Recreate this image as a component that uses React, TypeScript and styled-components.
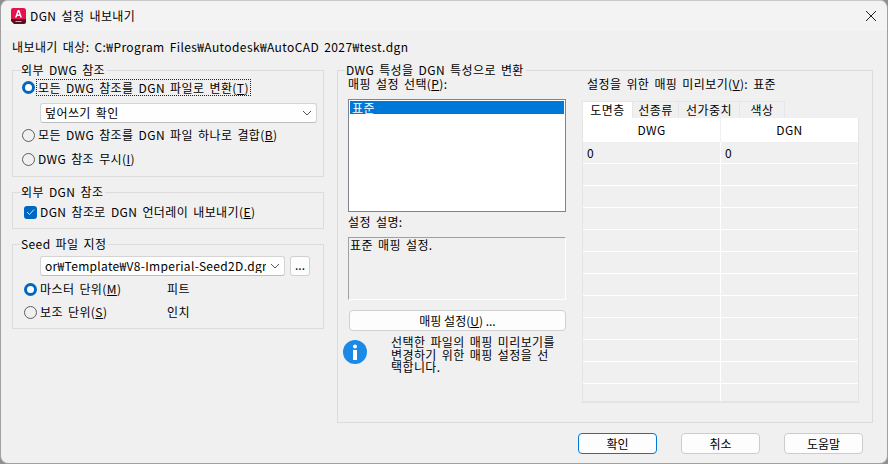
import React from 'react'
import styled, { createGlobalStyle } from 'styled-components'

const GlobalStyle = createGlobalStyle`
  html, body {
    margin: 0;
    padding: 0;
    background: #8f8f8f;
  }
  * {
    box-sizing: border-box;
  }
`;

const Dialog = styled.div`
  width: 888px;
  height: 464px;
  overflow: hidden;
  display: flex;
  flex-direction: column;
  background: #f0f0f0;
  border: 1px solid #a0a0a0;
  border-top-color: #c8c8c8;
  border-radius: 8px;
  font-family: "Noto Sans CJK KR", "Noto Sans", sans-serif;
  font-size: 12px;
  line-height: 14px;
  letter-spacing: 0.4px;
  word-spacing: 2px;
  color: #000;
`;

const TitleBar = styled.div`
  height: 30px;
  flex: none;
  display: flex;
  align-items: center;
  padding: 0 10px 0 10px;
  background: #f3f3f3;
`;

const TitleText = styled.span`
  flex: 1;
  margin-left: 4px;
`;

const Body = styled.div`
  flex: 1;
  display: flex;
  flex-direction: column;
  padding: 9px 14px 0 11px;
`;

const TargetLine = styled.div`
  height: 14px;
`;

const Columns = styled.div`
  display: flex;
  gap: 13px;
  margin-top: 9px;
`;

const LeftColumn = styled.div`
  width: 312px;
  display: flex;
  flex-direction: column;
  gap: 8px;
`;

const Group = styled.fieldset<{ $height: number }>`
  margin: 0;
  min-width: 0;
  height: ${({ $height }) => $height}px;
  padding: 0 8px;
  border: 1px solid #dcdcdc;
`;

const Legend = styled.legend`
  padding: 0 2px 0 0;
  height: 14px;
  line-height: 14px;
`;

const OptionRow = styled.label<{ $indent?: number; $top?: number }>`
  display: flex;
  align-items: center;
  height: 16px;
  margin-left: ${({ $indent }) => $indent ?? 1}px;
  margin-top: ${({ $top }) => $top ?? 0}px;
`;

const RadioMark = styled.span<{ $on?: boolean }>`
  flex: none;
  width: 13px;
  height: 13px;
  border-radius: 50%;
  margin-right: 3px;
  background: ${({ $on }) => ($on ? '#fff' : 'transparent')};
  border: ${({ $on }) => ($on ? '3.5px solid #0067c0' : '1px solid #5f5f5f')};
`;

const CheckMark = styled.span`
  flex: none;
  width: 13px;
  height: 13px;
  border-radius: 3px;
  margin-right: 3px;
  background: #0067c0;
  display: flex;
  align-items: center;
  justify-content: center;
`;

const FocusLabel = styled.span`
  outline: 1px dotted #222;
  padding: 0 1px;
  height: 15px;
  line-height: 15px;
  margin-left: -1px;
`;

const Key = styled.span`
  text-decoration: underline;
  text-underline-offset: 1px;
`;

const Combo = styled.div<{ $width: number; $top: number }>`
  width: ${({ $width }) => $width}px;
  height: 20px;
  margin: ${({ $top }) => $top}px 0 0 19px;
  display: flex;
  align-items: center;
  gap: 4px;
  padding: 0 4px;
  background: #fefefe;
  border: 1px solid #d4d4d4;
  border-bottom-color: #bdbdbd;
  border-radius: 3px;
  white-space: nowrap;
`;

const ComboText = styled.span`
  flex: 1;
  min-width: 0;
  overflow: hidden;
`;

const SeedPath = styled(ComboText)`
  letter-spacing: 0.32px;
`;

const SeedRow = styled.div`
  display: flex;
  gap: 5px;
`;

const SmallButton = styled.button`
  width: 20px;
  height: 20px;
  margin-top: 5px;
  padding: 0 0 3px;
  font: inherit;
  letter-spacing: 0;
  color: #000;
  background: #fdfdfd;
  border: 1px solid #d0d0d0;
  border-radius: 3px;
`;

const UnitValue = styled.span`
  margin-left: auto;
  width: 148px;
`;

const RightGroup = styled.fieldset`
  margin: 0;
  width: 537px;
  height: 360px;
  padding: 0 6px 0 10px;
  border: 1px solid #dcdcdc;
`;

const RightLegend = styled(Legend)`
  margin-left: -3px;
  padding-left: 1px;
`;

const MappingColumns = styled.div`
  display: flex;
`;

const MappingLeft = styled.div`
  width: 218px;
  display: flex;
  flex-direction: column;
`;

const FieldLabel = styled.div`
  height: 14px;
`;

const ListBox = styled.div`
  height: 113px;
  margin-top: 8px;
  padding: 1px;
  background: #fff;
  border: 1px solid #82828c;
`;

const ListRow = styled.div<{ $selected?: boolean }>`
  height: 13px;
  line-height: 13px;
  padding-left: 2px;
  background: ${({ $selected }) => ($selected ? '#0078d7' : 'transparent')};
  color: ${({ $selected }) => ($selected ? '#fff' : '#000')};
`;

const DescriptionLabel = styled(FieldLabel)`
  margin-top: 3px;
`;

const DescriptionBox = styled.div`
  height: 63px;
  margin-top: 8px;
  padding: 0 1px;
  border: 1px solid;
  border-color: #a0a0a0 #fff #fff #a0a0a0;
`;

const WideButton = styled.button`
  width: 217px;
  height: 21px;
  margin: 10px 0 0 1px;
  padding: 0;
  font: inherit;
  color: #000;
  background: #fdfdfd;
  border: 1px solid #d0d0d0;
  border-radius: 4px;
`;

const Hint = styled.div`
  display: flex;
  margin: 5px 0 0 -5px;
`;

const HintIcon = styled.svg`
  flex: none;
  width: 24px;
  height: 24px;
  margin-top: 4px;
`;

const HintText = styled.div`
  width: 168px;
  margin-left: 24px;
  line-height: 12.5px;
`;

const MappingRight = styled.div`
  margin-left: 16px;
  display: flex;
  flex-direction: column;
`;

const PreviewLabel = styled.div`
  height: 14px;
  margin-left: 5px;
`;

const Tabs = styled.div`
  display: flex;
  margin-top: 10px;
  height: 17px;
`;

const Tab = styled.div<{ $active?: boolean; $width: number }>`
  width: ${({ $width }) => $width}px;
  height: 17px;
  text-align: center;
  line-height: 16px;
  background: ${({ $active }) => ($active ? '#fff' : '#f0f0f0')};
  border: 1px solid #e6e6e6;
  border-bottom: none;
  border-left: ${({ $active }) => ($active ? '1px solid #e6e6e6' : 'none')};
`;

const MappingTable = styled.div`
  width: 277px;
  height: 285px;
  overflow: hidden;
  border-left: 1px solid #e4e4e4;
  border-right: 1px solid #e4e4e4;
  border-bottom: 2px solid #e4e4e4;
`;

const HeaderRow = styled.div`
  display: grid;
  grid-template-columns: 137px 1fr;
  height: 24px;
  background: #fff;
  line-height: 24px;
  text-align: center;
`;

const HeaderCell = styled.div`
  & + & {
    border-left: 1px solid #f0f0f0;
  }
`;

const DataRow = styled.div`
  display: grid;
  grid-template-columns: 137px 1fr;
  height: 22px;
  border-bottom: 1px solid #fff;
`;

const DataCell = styled.div`
  padding-left: 4px;
  line-height: 21px;
  & + & {
    border-left: 1px solid #fff;
  }
`;

const Footer = styled.div`
  display: flex;
  margin-top: 10px;
  margin-left: 566px;
`;

const DialogButton = styled.button<{ $primary?: boolean; $gap?: number }>`
  width: 79px;
  height: 21px;
  margin-left: ${({ $gap }) => $gap ?? 0}px;
  padding: 0;
  font: inherit;
  color: #000;
  background: #fdfdfd;
  border: ${({ $primary }) => ($primary ? '1px solid #0078d4' : '1px solid #cccccc')};
  border-radius: 4px;
`;

const ChevronSvg = styled.svg`
  flex: none;
  width: 10px;
  height: 6px;
`;

const AppLogo = () => (
  <svg width="15" height="16" viewBox="0 0 15 16">
    <path d="M0 2 A2 2 0 0 1 2 0 H12.5 A2.5 2.5 0 0 1 15 2.5 V11 H0 Z" fill="#e8114f" />
    <path d="M0 11 H15 V14 A2 2 0 0 1 13 16 H3 L0 13 Z" fill="#57101f" />
    <path d="M4 9.5 L6.7 2 H8.3 L11 9.5 H9.4 L8.9 8 H6.1 L5.6 9.5 Z M6.6 6.6 H8.4 L7.5 4 Z" fill="#fff" fillRule="evenodd" />
    <path d="M4.5 13.5 H10.5" stroke="#c9a0aa" strokeWidth="1" />
  </svg>
)

const CloseIcon = () => (
  <svg width="12" height="12" viewBox="0 0 12 12">
    <path d="M1 1 L11 11 M11 1 L1 11" stroke="#222" strokeWidth="1" fill="none" />
  </svg>
)

const Chevron = () => (
  <ChevronSvg viewBox="0 0 10 6">
    <path d="M1 1 L5 5 L9 1" stroke="#555" strokeWidth="1" fill="none" />
  </ChevronSvg>
)

const App: React.FC = () => {
  const rows = ['0', '', '', '', '', '', '', '', '', '', '', '', '']

  return (
    <>
      <GlobalStyle />
      <Dialog>
        <TitleBar>
          <AppLogo />
          <TitleText>DGN 설정 내보내기</TitleText>
          <CloseIcon />
        </TitleBar>
        <Body>
          <TargetLine>내보내기 대상: C:₩Program Files₩Autodesk₩AutoCAD 2027₩test.dgn</TargetLine>
          <Columns>
            <LeftColumn>
              <Group $height={114}>
                <Legend>외부 DWG 참조</Legend>
                <OptionRow $top={2}>
                  <RadioMark $on />
                  <FocusLabel>모든 DWG 참조를 DGN 파일로 변환(<Key>T</Key>)</FocusLabel>
                </OptionRow>
                <Combo $width={277} $top={8}>
                  <ComboText>덮어쓰기 확인</ComboText>
                  <Chevron />
                </Combo>
                <OptionRow $top={4}>
                  <RadioMark />
                  모든 DWG 참조를 DGN 파일 하나로 결합(<Key>B</Key>)
                </OptionRow>
                <OptionRow $top={8}>
                  <RadioMark />
                  DWG 참조 무시(<Key>I</Key>)
                </OptionRow>
              </Group>
              <Group $height={44}>
                <Legend>외부 DGN 참조</Legend>
                <OptionRow $indent={3} $top={5}>
                  <CheckMark>
                    <svg width="9" height="8" viewBox="0 0 9 8">
                      <path d="M1 4 L3.5 6.5 L8 1.5" stroke="#cfe4f7" strokeWidth="1" fill="none" />
                    </svg>
                  </CheckMark>
                  DGN 참조로 DGN 언더레이 내보내기(<Key>E</Key>)
                </OptionRow>
              </Group>
              <Group $height={92}>
                <Legend>Seed 파일 지정</Legend>
                <SeedRow>
                  <Combo $width={245} $top={5}>
                    <SeedPath>or₩Template₩V8-Imperial-Seed2D.dgn</SeedPath>
                    <Chevron />
                  </Combo>
                  <SmallButton>...</SmallButton>
                </SeedRow>
                <OptionRow $indent={3} $top={5}>
                  <RadioMark $on />
                  마스터 단위(<Key>M</Key>)
                  <UnitValue>피트</UnitValue>
                </OptionRow>
                <OptionRow $indent={3} $top={7}>
                  <RadioMark />
                  보조 단위(<Key>S</Key>)
                  <UnitValue>인치</UnitValue>
                </OptionRow>
              </Group>
            </LeftColumn>
            <RightGroup>
              <RightLegend>DWG 특성을 DGN 특성으로 변환</RightLegend>
              <MappingColumns>
                <MappingLeft>
                  <FieldLabel>매핑 설정 선택(<Key>P</Key>):</FieldLabel>
                  <ListBox>
                    <ListRow $selected>표준</ListRow>
                  </ListBox>
                  <DescriptionLabel>설정 설명:</DescriptionLabel>
                  <DescriptionBox>표준 매핑 설정.</DescriptionBox>
                  <WideButton>매핑 설정(<Key>U</Key>) ...</WideButton>
                  <Hint>
                    <HintIcon viewBox="0 0 24 24">
                      <circle cx="12" cy="12" r="12" fill="#1a8ae6" />
                      <circle cx="12" cy="6.5" r="2" fill="#fff" />
                      <rect x="10" y="10" width="4" height="10" fill="#fff" />
                    </HintIcon>
                    <HintText>선택한 파일의 매핑 미리보기를 변경하기 위한 매핑 설정을 선택합니다.</HintText>
                  </Hint>
                </MappingLeft>
                <MappingRight>
                  <PreviewLabel>설정을 위한 매핑 미리보기(<Key>V</Key>): 표준</PreviewLabel>
                  <Tabs>
                    <Tab $active $width={51}>도면층</Tab>
                    <Tab $width={46}>선종류</Tab>
                    <Tab $width={61}>선가중치</Tab>
                    <Tab $width={45}>색상</Tab>
                  </Tabs>
                  <MappingTable>
                    <HeaderRow>
                      <HeaderCell>DWG</HeaderCell>
                      <HeaderCell>DGN</HeaderCell>
                    </HeaderRow>
                    {rows.map((value, i) => (
                      <DataRow key={i}>
                        <DataCell>{value}</DataCell>
                        <DataCell>{value}</DataCell>
                      </DataRow>
                    ))}
                  </MappingTable>
                </MappingRight>
              </MappingColumns>
            </RightGroup>
          </Columns>
          <Footer>
            <DialogButton $primary>확인</DialogButton>
            <DialogButton $gap={24}>취소</DialogButton>
            <DialogButton $gap={24}>도움말</DialogButton>
          </Footer>
        </Body>
      </Dialog>
    </>
  )
}

export default App
